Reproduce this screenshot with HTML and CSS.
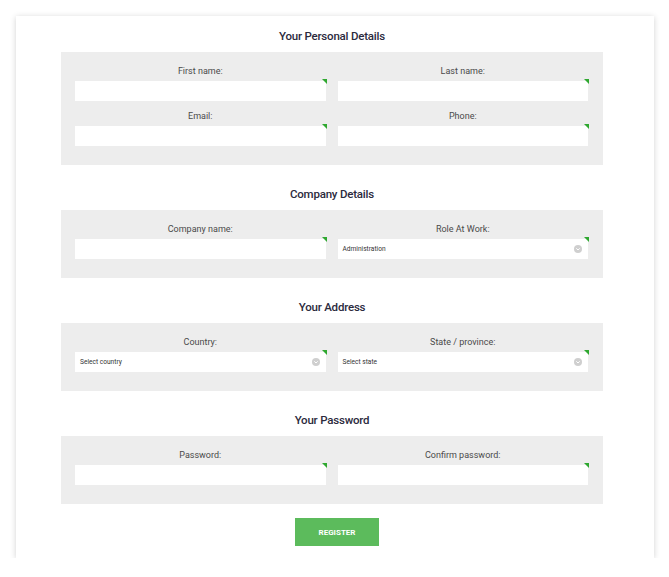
FILE: index.html
```html
<!DOCTYPE html>
<html lang="en">
<head>
    <meta charset="UTF-8">
    <meta name="viewport" content="width=device-width, initial-scale=1.0">
    <title>Register</title>
    <link rel="stylesheet" href="styles.css">
</head>
<body>
    <div class="card">
        <section class="group">
            <h2>Your Personal Details</h2>
            <div class="panel">
                <div class="field">
                    <label>First name:</label>
                    <div class="box"><input type="text"></div>
                </div>
                <div class="field">
                    <label>Last name:</label>
                    <div class="box"><input type="text"></div>
                </div>
                <div class="field">
                    <label>Email:</label>
                    <div class="box"><input type="text"></div>
                </div>
                <div class="field">
                    <label>Phone:</label>
                    <div class="box"><input type="text"></div>
                </div>
            </div>
        </section>

        <section class="group">
            <h2>Company Details</h2>
            <div class="panel">
                <div class="field">
                    <label>Company name:</label>
                    <div class="box"><input type="text"></div>
                </div>
                <div class="field">
                    <label>Role At Work:</label>
                    <div class="box select">
                        <span>Administration</span>
                        <svg class="caret" width="8" height="8" viewBox="0 0 8 8"><circle cx="4" cy="4" r="4" fill="#cfcfcf"/><path d="M2.3 3.3 L4 5 L5.7 3.3" fill="none" stroke="#fff" stroke-width="1"/></svg>
                    </div>
                </div>
            </div>
        </section>

        <section class="group">
            <h2>Your Address</h2>
            <div class="panel">
                <div class="field">
                    <label>Country:</label>
                    <div class="box select">
                        <span>Select country</span>
                        <svg class="caret" width="8" height="8" viewBox="0 0 8 8"><circle cx="4" cy="4" r="4" fill="#cfcfcf"/><path d="M2.3 3.3 L4 5 L5.7 3.3" fill="none" stroke="#fff" stroke-width="1"/></svg>
                    </div>
                </div>
                <div class="field">
                    <label>State / province:</label>
                    <div class="box select">
                        <span>Select state</span>
                        <svg class="caret" width="8" height="8" viewBox="0 0 8 8"><circle cx="4" cy="4" r="4" fill="#cfcfcf"/><path d="M2.3 3.3 L4 5 L5.7 3.3" fill="none" stroke="#fff" stroke-width="1"/></svg>
                    </div>
                </div>
            </div>
        </section>

        <section class="group">
            <h2>Your Password</h2>
            <div class="panel">
                <div class="field">
                    <label>Password:</label>
                    <div class="box"><input type="password"></div>
                </div>
                <div class="field">
                    <label>Confirm password:</label>
                    <div class="box"><input type="password"></div>
                </div>
            </div>
        </section>

        <div class="actions">
            <button type="submit">Register</button>
        </div>
    </div>
</body>
</html>
```

FILE: styles.css
```css
body {
    margin: 0;
    padding: 16px 15px 0 16px;
    background: #fff;
    font-family: Roboto, 'Liberation Sans', sans-serif;
    color: #444;
}

.card {
    background: #fff;
    box-shadow: 0 1px 6px rgba(0, 0, 0, 0.18);
    padding: 13px 51px 12px 45px;
}

.group + .group {
    margin-top: 22px;
}

.group h2 {
    margin: 0 0 9px;
    text-align: center;
    font-size: 11.5px;
    line-height: 14px;
    font-weight: 500;
    letter-spacing: -0.2px;
    color: #2b2a3d;
}

.panel {
    background: #ededed;
    display: grid;
    grid-template-columns: 1fr 1fr;
    column-gap: 12px;
    row-gap: 8px;
    padding: 12px 15px 19px 14px;
}

.field label {
    display: block;
    text-align: center;
    font-size: 9px;
    line-height: 14px;
    margin-bottom: 3px;
    color: #4a4a4a;
}

.box {
    position: relative;
    height: 20px;
    background: #fff;
}

.box::after {
    content: '';
    position: absolute;
    top: -2px;
    right: -1px;
    width: 0;
    height: 0;
    border-top: 5px solid #2fa830;
    border-left: 5px solid transparent;
}

.box input {
    width: 100%;
    height: 100%;
    border: none;
    padding: 0 5px;
    box-sizing: border-box;
    background: transparent;
    outline: none;
}

.select {
    display: flex;
    align-items: center;
    justify-content: space-between;
    padding: 0 6px 0 5px;
    font-size: 6.6px;
    color: #333;
}

.caret {
    display: block;
}

.actions {
    text-align: center;
    margin-top: 14px;
    padding-left: 10px;
}

.actions button {
    width: 84px;
    height: 28px;
    border: none;
    background: #5cbb5c;
    color: #fff;
    font-family: Roboto, 'Liberation Sans', sans-serif;
    font-size: 8px;
    font-weight: bold;
    text-transform: uppercase;
    cursor: pointer;
}
```
